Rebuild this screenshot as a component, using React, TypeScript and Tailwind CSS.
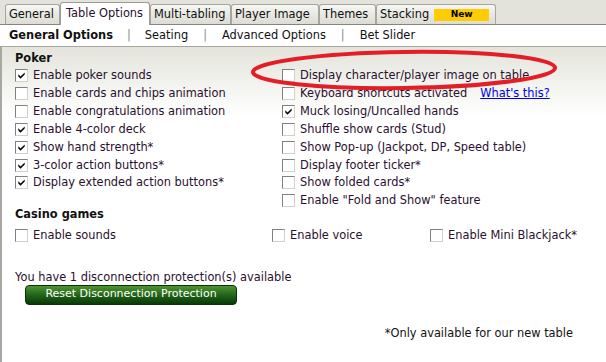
import React from "react";

type Opt = { label: string; checked?: boolean; link?: string };

const pokerLeft: Opt[] = [
  { label: "Enable poker sounds", checked: true },
  { label: "Enable cards and chips animation" },
  { label: "Enable congratulations animation" },
  { label: "Enable 4-color deck", checked: true },
  { label: "Show hand strength*", checked: true },
  { label: "3-color action buttons*", checked: true },
  { label: "Display extended action buttons*", checked: true },
];

const pokerRight: Opt[] = [
  { label: "Display character/player image on table" },
  { label: "Keyboard shortcuts activated", link: "What's this?" },
  { label: "Muck losing/Uncalled hands", checked: true },
  { label: "Shuffle show cards (Stud)" },
  { label: "Show Pop-up (Jackpot, DP, Speed table)" },
  { label: "Display footer ticker*" },
  { label: "Show folded cards*" },
  { label: 'Enable "Fold and Show" feature' },
];

const tabs = [
  { name: "General", w: "w-[55px]" },
  { name: "Table Options", w: "w-[90px]", active: true },
  { name: "Multi-tabling", w: "w-[81px]" },
  { name: "Player Image", w: "w-[88px]" },
  { name: "Themes", w: "w-[57px]" },
  { name: "Stacking", w: "w-[120px]", badge: true },
];

function Box({ checked }: { checked?: boolean }) {
  return (
    <span className="relative inline-block w-[13px] h-[13px] shrink-0 bg-white border border-t-[#808080] border-l-[#808080] border-r-[#d4d0c8] border-b-[#d4d0c8]">
      {checked && (
        <svg viewBox="0 0 11 11" className="absolute inset-0 w-[11px] h-[11px]">
          <path d="M2.3 4.3 L4.5 6.6 L8.7 2.4 L8.7 4.6 L4.5 8.8 L2.3 6.5 Z" fill="#000" />
        </svg>
      )}
    </span>
  );
}

function Row({ opt }: { opt: Opt }) {
  return (
    <div className="flex items-center h-[17.85px] gap-[5px]">
      <Box checked={opt.checked} />
      <span className="whitespace-nowrap">{opt.label}</span>
      {opt.link && (
        <a className="ml-[8px] text-[#0000ee] underline cursor-pointer whitespace-nowrap">{opt.link}</a>
      )}
    </div>
  );
}

export default function App() {
  return (
    <div
      className="relative w-[606px] h-[362px] overflow-hidden bg-white text-[11.4px] text-[#2a1030]"
      style={{ fontFamily: '"DejaVu Sans", Verdana, sans-serif' }}
    >
      {/* tab strip */}
      <div className="flex items-end h-[25px] pl-[5px] bg-[#e3e3db] border-b border-[#85857f]">
        {tabs.map((t) =>
          t.active ? (
            <div
              key={t.name}
              className={`${t.w} h-[23px] -mb-px flex items-center pl-[5px] bg-white border border-b-0 border-[#9c9c96] rounded-t-[3px] text-[#2a1030]`}
            >
              {t.name}
            </div>
          ) : (
            <div
              key={t.name}
              className={`${t.w} h-[20px] flex items-center pl-[3px] bg-gradient-to-b from-[#f6f6f2] to-[#dcdcd4] border border-b-0 border-[#a6a6a0] rounded-t-[3px] text-[#111]`}
            >
              {t.name}
              {t.badge && (
                <span className="ml-[5px] w-[55px] h-[12px] bg-[#ffcc00] text-[9px] font-bold text-black flex items-center justify-center">
                  New
                </span>
              )}
            </div>
          )
        )}
      </div>

      {/* sub navigation */}
      <div className="flex items-center h-[22px] pl-[9px] bg-white border-b border-[#a7a7a0] text-[#111]">
        <span className="font-bold">General Options</span>
        <span className="mx-[14px] text-[#8a8a8a]">|</span>
        <span>Seating</span>
        <span className="mx-[15px] text-[#8a8a8a]">|</span>
        <span>Advanced Options</span>
        <span className="mx-[15px] text-[#8a8a8a]">|</span>
        <span>Bet Slider</span>
      </div>

      {/* content */}
      <div className="h-[315px] flex flex-col pl-[13px] pt-[4px] border-l-2 border-[#a8a8a2] bg-gradient-to-b from-[#e4e4dc] via-white via-[22%] to-white">
        <div className="font-bold text-[#111] h-[15px] leading-[15px]">Poker</div>
        <div className="grid grid-cols-[267px_1fr] mt-[1px]">
          <div className="flex flex-col">
            {pokerLeft.map((o) => (
              <Row key={o.label} opt={o} />
            ))}
          </div>
          <div className="flex flex-col">
            {pokerRight.map((o) => (
              <Row key={o.label} opt={o} />
            ))}
          </div>
        </div>

        <div className="font-bold text-[#111] -mt-[3px] h-[15px] leading-[15px]">Casino games</div>
        <div className="grid grid-cols-[257px_158px_1fr] mt-[5px]">
          <Row opt={{ label: "Enable sounds" }} />
          <Row opt={{ label: "Enable voice" }} />
          <Row opt={{ label: "Enable Mini Blackjack*" }} />
        </div>

        <div className="mt-[25px] h-[14px] leading-[14px]">You have 1 disconnection protection(s) available</div>
        <button className="ml-[10px] mt-[1px] w-[212px] h-[20px] rounded-[4px] border border-[#0a3205] bg-gradient-to-b from-[#4f9432] via-[#21651a] to-[#0a3a06] text-white text-[11px] flex items-center justify-center">
          Reset Disconnection Protection
        </button>

        <div className="mt-[20px] self-end pr-[33px] text-[#111]">*Only available for our new table</div>
      </div>

      {/* red highlight ellipse */}
      <svg className="absolute left-[245px] top-[44px] w-[320px] h-[52px] pointer-events-none" viewBox="0 0 320 52">
        <ellipse cx="159" cy="26" rx="151" ry="18" fill="none" stroke="#e41e26" strokeWidth="4" transform="rotate(-0.8 159 26)" />
      </svg>
    </div>
  );
}
